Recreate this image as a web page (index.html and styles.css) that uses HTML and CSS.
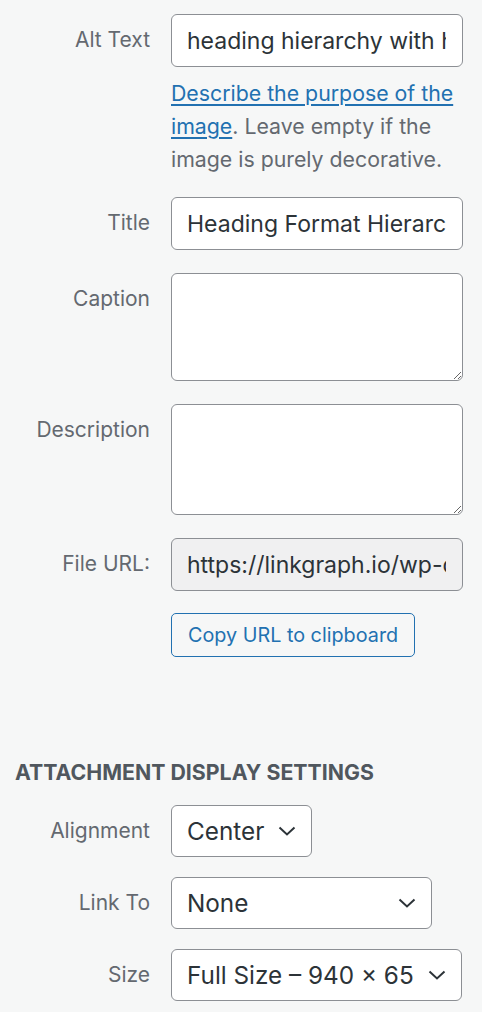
FILE: index.html
```html
<!DOCTYPE html>
<html>
<head>
<meta charset="utf-8">
<link rel="stylesheet" href="styles.css">
</head>
<body>
<div class="panel">
  <div class="row row-help">
    <label class="name">Alt Text</label>
    <div class="control">
      <input class="field" type="text" value="heading hierarchy with heading tags">
      <p class="help"><a href="#">Describe the purpose of the image</a>. Leave empty if the image is purely decorative.</p>
    </div>
  </div>
  <div class="row">
    <label class="name">Title</label>
    <div class="control">
      <input class="field" type="text" value="Heading Format Hierarchy">
    </div>
  </div>
  <div class="row">
    <label class="name">Caption</label>
    <div class="control">
      <textarea class="field area"></textarea>
    </div>
  </div>
  <div class="row">
    <label class="name">Description</label>
    <div class="control">
      <textarea class="field area area2"></textarea>
    </div>
  </div>
  <div class="row">
    <label class="name">File URL:</label>
    <div class="control">
      <input class="field readonly" type="text" readonly value="https://linkgraph.io/wp-content/uploads/heading.png">
      <button class="copy" type="button">Copy URL to clipboard</button>
    </div>
  </div>

  <h2 class="section">Attachment Display Settings</h2>

  <div class="row srow">
    <label class="name">Alignment</label>
    <div class="control">
      <div class="select w-align"><span>Center</span><svg class="chev" viewBox="0 0 18 10"><path d="M1.5 1.5 L9 8.5 L16.5 1.5" fill="none" stroke="#2c3338" stroke-width="2"/></svg></div>
    </div>
  </div>
  <div class="row srow">
    <label class="name">Link To</label>
    <div class="control">
      <div class="select w-link"><span>None</span><svg class="chev" viewBox="0 0 18 10"><path d="M1.5 1.5 L9 8.5 L16.5 1.5" fill="none" stroke="#2c3338" stroke-width="2"/></svg></div>
    </div>
  </div>
  <div class="row srow">
    <label class="name">Size</label>
    <div class="control">
      <div class="select w-size"><span>Full Size – 940 × 65</span><svg class="chev" viewBox="0 0 18 10"><path d="M1.5 1.5 L9 8.5 L16.5 1.5" fill="none" stroke="#2c3338" stroke-width="2"/></svg></div>
    </div>
  </div>
</div>
</body>
</html>
```
FILE: styles.css
```css
* { box-sizing: border-box; }
html, body { margin: 0; padding: 0; }
body {
  background: #f6f7f7;
  font-family: Inter, "Liberation Sans", sans-serif;
  color: #646970;
  width: 482px;
  height: 1012px;
  overflow: hidden;
}
.panel {
  padding: 14px 19px 0 0;
}
.row {
  display: grid;
  grid-template-columns: 150px 292px;
  column-gap: 21px;
  margin-bottom: 23px;
}
.row-help { margin-bottom: 21px; }
.name {
  text-align: right;
  font-size: 21px;
  line-height: 28px;
  padding-top: 12px;
  color: #646970;
  white-space: nowrap;
}
.control { display: flex; flex-direction: column; align-items: flex-start; }
.field {
  width: 292px;
  height: 53px;
  border: 1.5px solid #8c8f94;
  border-radius: 6px;
  background: #fff;
  font-family: Inter, "Liberation Sans", sans-serif;
  font-size: 23px;
  color: #2c3338;
  padding: 0 16px 0 15px;
  margin: 0;
  outline: none;
}
.area {
  height: 108px;
  resize: vertical;
  display: block;
}
.area2 { height: 111px; }
.readonly { background: #f0f0f1; }
.help {
  margin: 10px 0 0 0;
  font-size: 21.3px;
  line-height: 33px;
  color: #646970;
}
.help a { color: #2271b1; text-decoration: underline; text-underline-offset: 3px; }
.copy {
  margin-top: 22px;
  height: 44px;
  padding: 0 16px;
  border: 1.5px solid #2271b1;
  border-radius: 5px;
  background: #f6f7f7;
  color: #2271b1;
  font-family: Inter, "Liberation Sans", sans-serif;
  font-size: 19.8px;
}
.section {
  margin: 101px 0 19px 15px;
  font-size: 21.3px;
  font-weight: 700;
  text-transform: uppercase;
  color: #50575e;
  line-height: 28px;
}
.srow { margin-bottom: 20px; }
.select {
  height: 52px;
  border: 1.5px solid #8c8f94;
  border-radius: 6px;
  background: #fff;
  display: flex;
  align-items: center;
  justify-content: space-between;
  padding: 0 15px 0 15px;
  font-size: 24.3px;
  color: #2c3338;
}
.chev { width: 18px; height: 10px; flex: none; }
.w-align { width: 141px; }
.w-link { width: 261px; }
.w-size { width: 291px; }
```
